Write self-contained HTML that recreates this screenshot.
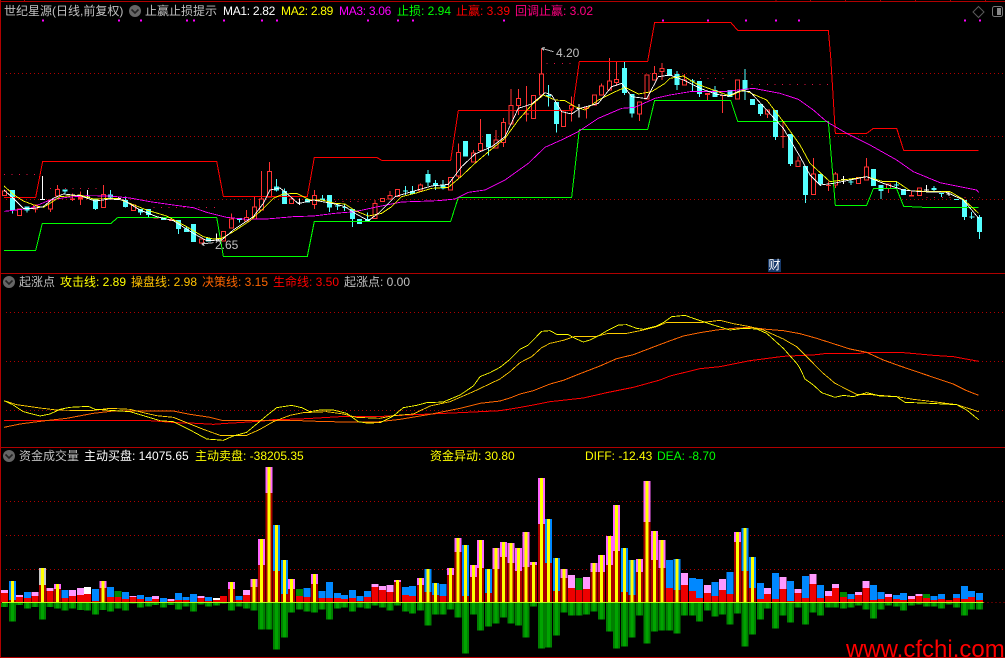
<!DOCTYPE html>
<html><head><meta charset="utf-8"><style>
html,body{margin:0;padding:0;background:#000;width:1005px;height:658px;overflow:hidden}
#w{position:relative;width:1005px;height:658px;background:#000;overflow:hidden}
svg{position:absolute;left:0;top:0}
path,polyline{fill:none}
.t{position:absolute;font:12px/14px "Liberation Sans","WenQuanYi Zen Hei","Noto Sans CJK SC",sans-serif;white-space:pre;color:#c0c0c0}
.m{letter-spacing:-.3px}
</style></head><body><div id="w">
<svg width="1005" height="658" viewBox="0 0 3015 1974" shape-rendering="crispEdges">
<g stroke="#b00000" stroke-width="3" fill="none">
<path d="M0 4.5H3015M1.5 0V1974M0 820.5H3015M0 1342.5H3015M0 1972.5H3015"/>
<path d="M73.5 0V4M2328 0V4M2431 0V4M2536 0V4M2641 0V4M2746 0V4M2851 0V4M2956 0V4"/>
<path stroke-dasharray="3 9" d="M18 220.5H3015M18 409.5H3015M18 598.5H3015M18 937.5H3015M18 1084.5H3015M18 1231.5H3015M18 1504.5H3015M18 1606.5H3015M18 1708.5H3015M2950 1807.5H3015"/>
</g>
<!-- dotted 回调止赢 -->
<g stroke="#e01040" stroke-width="3" stroke-dasharray="3 19.67" fill="none">
<path d="M12 523.5H110M150 565.5H310M460 622.5H650M1640 190.5H1720M2100 235.5H2170M2255 253.5H2490M2780 592.5H2940M1005 604.5H1105"/>
</g>
<!-- magenta top dots -->
<path stroke="#ff00ff" stroke-width="6" d="M126 62h6M354 62h6M420 62h6M558 62h6M579 62h6M669 62h6M783 62h6M828 62h6M1101 62h6M1191 62h6M1236 62h6M1509 62h6M1986 62h6M2121 62h6M2235 62h6M2325 62h6M2394 62h6M2892 62h6M2937 62h6"/>

<!-- candles 1 -->
<g>
<path stroke="#54ffff" stroke-width="15" d="M37 570V632M81 620V632M195 568V574M286 597V627M331 583V592M376 600V621M421 627V638M445 627V645M490 652V660M536 660V687M559 686V696M581 672V726M626 714V724M718 654V660M830 560V572M853 573V612M922 597V608M967 595V602M988 585V623"/>
<path stroke="#54ffff" stroke-width="3" d="M37 570V640M81 620V638M195 568V582M286 597V630M331 570V597M376 590V623M421 627V645M445 627V651M536 660V702M559 680V696M718 654V668M830 537V575M853 566V612M967 585V602M988 585V636"/>
<path stroke="#ff3232" stroke-width="3" d="M106 627V638M151 627V636M172 555V568M310 555V584M695 640V657M739 630V652M763 590V621M785 513V597M808 486V514M874 590V597M943 570V586M943 613V627M217 580V603M241 575V615"/>
<path stroke="#ff3232" stroke-width="15" d="M217 595V600M241 590V599M468 652V656M514 657V663"/>
<path stroke="#ff3232" stroke-width="3" fill="#000" style="fill:#000" d="M8 573h12v14h-12zM52 627h12v20h-12zM100 615h12v12h-12zM145 600h12v27h-12zM166 568h12v20h-12zM304 584h12v39h-12zM394 615h12v17h-12zM598 717h12v12h-12zM664 694h12v29h-12zM689 657h12v27h-12zM733 652h12v11h-12zM757 621h12v36h-12zM779 597h12v33h-12zM802 514h12v77h-12zM868 597h12v13h-12zM937 586h12v27h-12z"/>
<path stroke="#fff" stroke-width="3" d="M127 528V600M120 598.5h15M262 570V597M255 590.5h15M355 590V600M348 595.5h15M649 700V723M642 717.5h15M898 595V615M891 608.5h15"/>
</g>
<!-- candles 2 -->
<g transform="translate(1005 0)">
<path stroke="#54ffff" stroke-width="15" d="M52 627V657M74 657V672M97 657V663M233 573V582M279 522V548M301 549V556M324 555V565M392 423V470M460 402V442M641 285V290M664 306V372M868 204V279M891 282V340"/>
<path stroke="#54ffff" stroke-width="3" d="M7 610V630M0 618.5h15M29 610V633M22 622.5h15M52 627V681M97 638V657M211 558V585M204 573.5h15M233 558V582M279 510V558M301 540V570M324 540V568M460 402V467M641 255V320M664 306V398M868 186V285M891 282V352"/>
<path stroke="#ff3232" stroke-width="3" d="M120 600V610M165 573V586M256 550V555M370 430V537M415 450V459M437 357V430M483 390V420M505 354V441M528 267V317M551 267V345M619 145V222M709 290V365M800 250V258M823 174V243M845 183V258M913 342V363M959 198V220M981 189V240M574 258V365M755 318V355"/>
<path stroke="#ff3232" stroke-width="15" d="M574 340V344M755 323V327"/>
<path stroke="#ff3232" stroke-width="3" style="fill:#000" d="M114 610h12v45h-12zM136 595h12v10h-12zM159 586h12v11h-12zM182 568h12v22h-12zM250 555h12v18h-12zM341 533h12v37h-12zM364 457h12v71h-12zM409 459h12v27h-12zM431 430h12v21h-12zM477 420h12v24h-12zM499 367h12v60h-12zM522 317h12v55h-12zM545 295h12v22h-12zM590 287h12v69h-12zM613 222h12v63h-12zM680 336h12v44h-12zM703 317h12v10h-12zM772 285h12v30h-12zM794 258h12v27h-12zM817 243h12v27h-12zM839 238h12v10h-12zM907 306h12v36h-12zM930 225h12v72h-12zM953 220h12v20h-12zM975 205h12v10h-12z"/>
<path stroke="#fff" stroke-width="3" d="M732 312V352M725 325.5h15"/>
</g>
<!-- candles 3 -->
<g transform="translate(2010 0)">
<path stroke="#54ffff" stroke-width="15" d="M-1 207V228M21 222V255M89 243V282M135 270V291M180 270V291M225 240V270M248 297V315M271 312V342M316 330V411M361 402V492M407 498V585M452 522V552M611 507V558M633 555V573M701 567V585M792 564V570M815 579V582M860 597V600M883 600V651M929 651V696"/>
<path stroke="#54ffff" stroke-width="3" d="M21 213V270M67 237V275M60 243.5h15M89 243V291M135 258V291M225 207V300M271 312V348M316 330V420M361 402V498M407 498V609M452 522V558M543 538V555M536 546.5h15M633 555V597M679 543V565M672 555.5h15M792 558V573M815 579V591M883 600V660M905 636V657M898 651.5h15M929 645V717"/>
<path stroke="#ff3232" stroke-width="3" d="M44 222V240M293 342V354M384 470V483M430 474V522M497 516V564M590 474V501M656 565V579M112 279V300M157 285V339M339 366V444M475 545V573M724 573V590"/>
<path stroke="#ff3232" stroke-width="15" d="M112 279V285M157 285V288M339 408V411M475 555V558M724 585V590"/>
<path stroke="#ff3232" stroke-width="3" style="fill:#000" d="M38 240h12v15h-12zM197 240h12v57h-12zM287 330h12v12h-12zM378 483h12v17h-12zM424 522h12v62h-12zM491 522h12v33h-12zM559 533h12v18h-12zM584 501h12v39h-12zM650 552h12v13h-12zM742 564h12v22h-12z"/>
<path stroke="#fff" stroke-width="3" d="M520 528V552M513 538.5h15M769 555V573M762 570.5h15M837 573V588M830 582.5h15"/>
</g>

<!-- main lines -->
<g stroke-width="3" fill="none">
<polyline stroke="#00ff00" points="12,751 107,751 127,670 333,670 354,652 650,652 670,769 922,769 943,664 1352,664 1375,592 1715,592 1738,388 1943,388 1964,301 2192,301 2213,364 2485,364 2506,616 2600,616 2620,566 2690,566 2711,619 2770,622 2936,622"/>
<polyline stroke="#ff0000" points="12,592 107,592 128,484 650,484 670,589 922,589 943,472 1130,472 1145,481 1352,481 1375,331 1717,331 1738,184 1943,184 1964,67 2192,67 2213,91 2485,91 2492,170 2500,300 2506,400 2600,400 2620,385 2690,385 2711,451 2936,451"/>
<polyline stroke="#ff00ff" stroke-width="2.6" points="12,634 40,631 90,625 150,600 200,592 260,587 330,588 390,594 450,605 520,615 580,623 620,637 680,652 740,658 800,657 880,650 940,648 1005,640 1065,635 1125,622 1205,606 1315,602 1365,597 1405,577 1455,570 1515,540 1585,490 1635,442 1695,415 1735,395 1795,355 1865,325 1905,322 1965,295 2010,285 2070,275 2180,274 2260,265 2340,280 2395,298 2440,330 2480,365 2540,400 2610,435 2690,480 2740,515 2820,548 2930,570 2936,577"/>
<polyline stroke="#ffff00" stroke-width="2.6" points="12,558 40,583 70,603 110,618 130,622 150,610 180,590 240,585 280,597 350,595 390,610 440,630 500,648 560,680 610,710 640,717 665,715 700,695 750,662 785,630 820,595 850,582 890,580 930,600 965,600 1005,610 1035,612 1065,632 1105,648 1145,640 1175,620 1205,590 1245,580 1295,565 1345,562 1385,528 1425,490 1475,447 1515,415 1555,360 1595,315 1630,285 1665,300 1695,302 1725,320 1755,330 1795,300 1835,280 1875,262 1915,282 1955,275 1995,250 2010,235 2050,228 2090,252 2140,270 2190,288 2230,270 2300,300 2350,365 2400,435 2430,490 2490,545 2550,537 2600,530 2650,545 2690,545 2730,572 2800,575 2850,575 2890,598 2936,640"/>
<polyline stroke="#ffffff" stroke-width="2.6" points="12,570 40,595 70,625 100,625 130,620 160,595 190,582 240,587 285,603 330,597 370,600 420,630 470,650 520,662 580,700 620,722 665,720 700,690 760,650 790,610 810,570 840,564 860,580 895,611 940,600 1005,612 1035,620 1065,640 1105,662 1135,640 1185,590 1225,578 1295,558 1345,553 1385,500 1425,462 1475,440 1515,410 1555,325 1595,312 1635,278 1655,285 1685,335 1715,342 1740,325 1795,310 1835,260 1865,250 1895,290 1940,296 1975,230 2010,225 2050,240 2100,265 2150,283 2185,288 2220,272 2250,275 2300,330 2350,385 2400,470 2430,525 2460,555 2500,550 2550,540 2600,530 2650,550 2710,570 2760,575 2840,577 2890,600 2936,655"/>
</g>
<!-- arrows -->
<g stroke="#c0c0c0" stroke-width="3" fill="none">
<path d="M1625 145L1660 155M1625 145l9-3M1625 145l7 6"/>
<path d="M605 732L640 728M605 732l9-5M605 732l8 5"/>
</g>

<!-- panel 2 -->
<g stroke-width="3" fill="none">
<polyline stroke="#ff0000" points="12,1262 450,1262 530,1268 590,1270 640,1273 680,1270 730,1267 790,1263 820,1259 900,1257 1020,1250 1130,1250 1200,1246 1290,1242 1400,1237 1500,1232 1550,1224 1600,1215 1650,1205 1750,1194 1820,1178 1900,1162 1980,1140 2010,1128 2100,1106 2160,1100 2250,1082 2350,1069 2450,1064 2480,1060 2580,1060 2600,1057 2700,1057 2800,1066 2860,1070 2936,1084"/>
<polyline stroke="#ff6600" points="12,1282 60,1272 120,1264 200,1255 280,1240 340,1233 520,1233 570,1243 630,1252 670,1262 730,1262 790,1262 900,1262 980,1265 1070,1266 1130,1266 1200,1258 1290,1243 1380,1225 1440,1210 1500,1203 1530,1194 1560,1182 1600,1172 1650,1152 1690,1141 1740,1121 1800,1098 1850,1076 1900,1064 1950,1045 2000,1026 2050,1008 2100,998 2150,990 2200,985 2250,982 2300,988 2350,992 2400,1001 2450,1015 2500,1031 2550,1047 2600,1057 2650,1080 2700,1098 2750,1115 2800,1132 2860,1152 2900,1172 2936,1186"/>
<polyline stroke="#ffcc00" stroke-width="2.6" points="12,1202 50,1214 120,1224 170,1230 210,1231 280,1231 330,1225 390,1228 430,1238 470,1247 520,1252 570,1272 610,1288 660,1306 740,1306 780,1288 820,1265 870,1246 910,1238 980,1235 1030,1242 1070,1252 1140,1255 1180,1247 1240,1242 1290,1218 1350,1205 1420,1175 1500,1137 1530,1115 1560,1088 1595,1070 1625,1043 1650,1030 1690,1021 1725,1009 1790,1009 1825,1000 1880,1000 1930,990 1970,980 2000,967 2110,967 2160,961 2200,971 2245,979 2290,990 2350,1017 2390,1040 2430,1080 2465,1116 2505,1150 2570,1183 2600,1183 2690,1190 2740,1198 2800,1205 2870,1214 2936,1235"/>
<polyline stroke="#ffff00" stroke-width="2.6" points="12,1202 40,1215 70,1235 120,1248 150,1242 180,1228 210,1222 265,1219 285,1228 330,1231 390,1235 440,1250 480,1262 520,1265 570,1290 620,1317 670,1321 700,1308 740,1297 770,1272 800,1247 830,1223 875,1216 905,1223 930,1235 960,1230 1000,1230 1040,1240 1075,1265 1100,1269 1140,1268 1180,1248 1210,1223 1250,1216 1280,1208 1330,1206 1380,1185 1420,1158 1440,1130 1470,1118 1500,1102 1530,1078 1560,1048 1585,1035 1625,994 1650,992 1670,1003 1705,1004 1725,1015 1750,1026 1770,1020 1800,1005 1825,990 1855,975 1880,974 1910,985 1930,988 1970,978 1990,968 2015,950 2055,946 2080,955 2110,965 2140,975 2190,990 2230,985 2270,987 2300,1000 2350,1045 2390,1090 2400,1105 2415,1137 2440,1155 2465,1178 2505,1192 2530,1186 2560,1190 2600,1178 2640,1188 2690,1190 2715,1207 2790,1210 2870,1214 2900,1230 2936,1259"/>
</g>

<!-- panel 3 bars -->
<g transform="translate(0 1335)" fill="none">
<path stroke="#ff99ff" stroke-width="21" d="M14 435V444M59 450V456M105 441V453M150 429V438M218 435V453M241 429V450M399 453V456M467 453V462M513 462V468M603 453V459M739 435V450"/>
<path stroke="#0088ff" stroke-width="21" d="M82 441V459M195 435V459M286 432V468M331 426V456M377 441V462M422 450V462M445 456V468M490 459V471M535 444V465M558 456V465M581 447V471M626 456V468M717 453V465M921 429V456M966 438V459M989 411V459M37 408V465M830 240V378M853 345V447"/>
<path stroke="#008800" stroke-width="21" d="M354 438V456M898 432V453"/>
<path stroke="#ffffff" stroke-width="21" d="M263 426V447M649 459V465"/>
<path stroke="#c8c8c8" stroke-width="21" d="M127 369V420"/>
<path stroke="#ff66ff" stroke-width="21" d="M173 417V432M309 408V429M694 411V432M762 402V426M785 282V360M807 66V144M875 402V432M943 387V417"/>
<path stroke="#ee0000" stroke-width="21" d="M14 444V472M59 456V472M82 459V472M105 453V472M150 438V472M195 459V472M218 453V472M241 450V472M263 447V472M286 468V472M331 456V472M354 456V472M377 462V472M399 456V472M422 462V472M445 468V472M467 462V472M513 468V472M535 465V472M558 465V472M603 459V472M626 468V472M649 465V472M671 453V472M717 465V472M739 450V472M898 453V472M921 456V472M966 459V472M989 459V472"/>
<path stroke="#aa0000" stroke-width="21" d="M37 465V472M127 420V472M173 432V472M309 429V472M694 432V472M762 426V472M785 360V472M807 144V472M830 378V472M853 447V472M875 432V472M943 417V472"/>
<path stroke="#ffff00" stroke-width="9" d="M37 408V472M127 369V472M173 417V472M309 408V472M694 411V472M762 402V472M785 282V472M807 66V472M830 240V472M853 345V472M875 402V472M943 387V472"/>
<path stroke="#008000" stroke-width="21" d="M14 474V486M37 474V530M59 474V480M82 474V491M105 474V486M127 474V524M150 474V486M173 474V491M195 474V497M218 474V491M241 474V495M263 474V497M286 474V509M309 474V495M331 474V500M354 474V491M377 474V497M399 474V476M422 474V488M445 474V485M467 474V480M490 474V488M513 474V480M535 474V494M558 474V485M581 474V500M603 474V479M626 474V485M649 474V482M671 474V476M694 474V497M717 474V485M739 474V491M762 474V497M785 474V554M807 474V554M830 474V614M853 474V578M875 474V503M898 474V494M921 474V500M943 474V503M966 474V494M989 474V524"/>
<path stroke="#00a400" stroke-width="9" d="M14 474V486M37 474V530M59 474V480M82 474V491M105 474V486M127 474V524M150 474V486M173 474V491M195 474V497M218 474V491M241 474V495M263 474V497M286 474V509M309 474V495M331 474V500M354 474V491M377 474V497M399 474V476M422 474V488M445 474V485M467 474V480M490 474V488M513 474V480M535 474V494M558 474V485M581 474V500M603 474V479M626 474V485M649 474V482M671 474V476M694 474V497M717 474V485M739 474V491M762 474V497M785 474V554M807 474V554M830 474V614M853 474V578M875 474V503M898 474V494M921 474V500M943 474V503M966 474V494M989 474V524"/>
</g>
<g transform="translate(1005 1335)" fill="none">
<path stroke="#ff99ff" stroke-width="21" d="M120 417V426M143 423V435M165 420V441M709 390V429M755 396V432"/>
<path stroke="#0088ff" stroke-width="21" d="M7 444V459M29 450V462M52 435V459M75 453V468M97 438V456M211 426V450M233 423V453M324 417V453M279 372V441M301 414V450M392 300V453M460 372V444M641 222V354M664 339V438M868 309V441M891 345V450"/>
<path stroke="#008800" stroke-width="21" d="M732 399V435"/>
<path stroke="#ff66ff" stroke-width="21" d="M188 405V411M256 399V420M347 369V390M369 279V321M415 360V396M437 285V369M483 309V372M505 291V336M528 294V354M551 309V378M573 261V366M596 351V360M619 99V237M687 372V399M777 354V381M800 330V381M823 273V360M845 180V318M913 342V381M936 108V231M959 258V345M981 285V369"/>
<path stroke="#ee0000" stroke-width="21" d="M7 459V472M29 462V472M52 459V472M75 468V472M97 456V472M120 426V472M143 435V472M165 441V472M211 450V472M233 453V472M324 453V472M709 429V472M732 435V472M755 432V472"/>
<path stroke="#aa0000" stroke-width="21" d="M188 411V472M256 420V472M279 441V472M301 450V472M347 390V472M369 321V472M392 453V472M415 396V472M437 369V472M460 444V472M483 372V472M505 336V472M528 354V472M551 378V472M573 366V472M596 360V472M619 237V472M641 354V472M664 438V472M687 399V472M777 381V472M800 381V472M823 360V472M845 318V472M868 441V472M891 450V472M913 381V472M936 231V472M959 345V472M981 369V472"/>
<path stroke="#ffff00" stroke-width="9" d="M188 405V472M256 399V472M279 372V472M301 414V472M347 369V472M369 279V472M392 300V472M415 360V472M437 285V472M460 372V472M483 309V472M505 291V472M528 294V472M551 309V472M573 261V472M596 351V472M619 99V472M641 222V472M664 339V472M687 372V472M777 354V472M800 330V472M823 273V472M845 180V472M868 309V472M891 345V472M913 342V472M936 108V472M959 258V472M981 285V472"/>
<path stroke="#008000" stroke-width="21" d="M7 474V491M29 474V488M52 474V500M75 474V488M97 474V491M120 474V482M143 474V488M165 474V497M188 474V482M211 474V500M233 474V506M256 474V497M279 474V542M301 474V509M324 474V509M347 474V494M369 474V518M392 474V626M415 474V509M437 474V557M460 474V545M483 474V536M505 474V518M528 474V536M551 474V542M573 474V578M596 474V485M619 474V611M641 474V608M664 474V572M687 474V503M709 474V512M732 474V512M755 474V509M777 474V500M800 474V524M823 474V560M845 474V611M868 474V605M891 474V578M913 474V512M936 474V596M959 474V560M981 474V557"/>
<path stroke="#00a400" stroke-width="9" d="M7 474V491M29 474V488M52 474V500M75 474V488M97 474V491M120 474V482M143 474V488M165 474V497M188 474V482M211 474V500M233 474V506M256 474V497M279 474V542M301 474V509M324 474V509M347 474V494M369 474V518M392 474V626M415 474V509M437 474V557M460 474V545M483 474V536M505 474V518M528 474V536M551 474V542M573 474V578M596 474V485M619 474V611M641 474V608M664 474V572M687 474V503M709 474V512M732 474V512M755 474V509M777 474V500M800 474V524M823 474V560M845 474V611M868 474V605M891 474V578M913 474V512M936 474V596M959 474V560M981 474V557"/>
</g>
<g transform="translate(2010 1335)" fill="none">
<path stroke="#ff99ff" stroke-width="21" d="M44 384V420M112 420V444M157 402V435M293 429V447M339 396V432M384 432V444M429 387V417M475 438V453M497 417V429M565 441V450M588 408V429M656 447V456M724 453V462M747 447V453"/>
<path stroke="#0088ff" stroke-width="21" d="M-1 345V429M21 342V435M67 399V438M89 402V459M135 411V453M180 381V447M225 249V378M248 336V429M271 414V462M316 384V462M361 408V468M407 393V459M452 420V459M543 447V462M611 420V465M633 441V462M679 450V462M701 444V465M792 453V465M815 447V462M860 447V459M883 423V462M905 438V456M928 444V465"/>
<path stroke="#008800" stroke-width="21" d="M520 441V456M769 447V459"/>
<path stroke="#ff66ff" stroke-width="21" d="M203 261V291"/>
<path stroke="#ee0000" stroke-width="21" d="M-1 429V472M44 420V472M67 438V472M89 459V472M112 444V472M135 453V472M157 435V472M180 447V472M271 462V472M293 447V472M316 462V472M339 432V472M361 468V472M384 444V472M407 459V472M429 417V472M452 459V472M475 453V472M497 429V472M520 456V472M543 462V472M565 450V472M588 429V472M611 465V472M633 462V472M656 456V472M679 462V472M701 465V472M724 462V472M747 453V472M769 459V472M792 465V472M815 462V472M837 465V472M860 459V472M883 462V472M905 456V472M928 465V472"/>
<path stroke="#aa0000" stroke-width="21" d="M21 435V472M203 291V472M225 378V472M248 429V472"/>
<path stroke="#ffff00" stroke-width="9" d="M21 342V472M203 261V472M225 249V472M248 336V472"/>
<path stroke="#008000" stroke-width="21" d="M-1 474V557M21 474V566M44 474V512M67 474V512M89 474V530M112 474V497M135 474V515M157 474V509M180 474V539M203 474V506M225 474V605M248 474V569M271 474V524M293 474V491M316 474V551M339 474V512M361 474V533M384 474V488M407 474V539M429 474V503M452 474V512M475 474V488M497 474V488M520 474V491M543 474V488M565 474V482M588 474V494M611 474V521M633 474V494M656 474V482M679 474V485M701 474V497M724 474V482M747 474V479M769 474V485M792 474V485M815 474V491M837 474V479M860 474V488M883 474V512M905 474V494M928 474V494"/>
<path stroke="#00a400" stroke-width="9" d="M-1 474V557M21 474V566M44 474V512M67 474V512M89 474V530M112 474V497M135 474V515M157 474V509M180 474V539M203 474V506M225 474V605M248 474V569M271 474V524M293 474V491M316 474V551M339 474V512M361 474V533M384 474V488M407 474V539M429 474V503M452 474V512M475 474V488M497 474V488M520 474V491M543 474V488M565 474V482M588 474V494M611 474V521M633 474V494M656 474V482M679 474V485M701 474V497M724 474V482M747 474V479M769 474V485M792 474V485M815 474V491M837 474V479M860 474V488M883 474V512M905 474V494M928 474V494"/>
</g>
<path stroke="#aaff22" stroke-width="3" d="M6 1807.5H2950"/>
</svg>

<!-- icons -->
<svg width="1005" height="658" viewBox="0 0 1005 658">
<circle cx="135" cy="11" r="6" fill="#666"/><path d="M131.5 9.5l3.5 3.5 3.5-3.5" stroke="#222" stroke-width="1.6" fill="none"/>
<circle cx="9" cy="282" r="6" fill="#666"/><path d="M5.5 280.5l3.5 3.5 3.5-3.5" stroke="#222" stroke-width="1.6" fill="none"/>
<circle cx="9" cy="456" r="6" fill="#666"/><path d="M5.5 454.5l3.5 3.5 3.5-3.5" stroke="#222" stroke-width="1.6" fill="none"/>
<path d="M978.5 6.5l5.5 5.5-5.5 5.5-5.5-5.5z" stroke="#5a5a5a" fill="none"/>
<rect x="992.5" y="6.5" width="10" height="10" rx="2" stroke="#777" fill="none"/><rect x="997" y="8" width="4" height="7" fill="#888"/>
</svg>

<span class="t" style="left:4px;top:4px">世纪星源(日线,前复权)</span>
<span class="t" style="left:145px;top:4px">止赢止损提示</span>
<span class="t m" style="left:223px;top:4px;color:#fff">MA1: 2.82</span>
<span class="t m" style="left:281px;top:4px;color:#ff0">MA2: 2.89</span>
<span class="t m" style="left:339px;top:4px;color:#f0f">MA3: 3.06</span>
<span class="t" style="left:397px;top:4px;color:#0f0">止损: 2.94</span>
<span class="t" style="left:456px;top:4px;color:#f00">止赢: 3.39</span>
<span class="t" style="left:515px;top:4px;color:#ff0080">回调止赢: 3.02</span>

<span class="t" style="left:556px;top:46px">4.20</span>
<span class="t" style="left:215px;top:238px">2.65</span>
<span class="t" style="left:768px;top:259px;width:13px;height:13px;background:#17396a;color:#fff;text-align:center;line-height:13px">财</span>

<span class="t" style="left:19px;top:275px">起涨点</span>
<span class="t" style="left:60px;top:275px;color:#ff0">攻击线: 2.89</span>
<span class="t" style="left:131px;top:275px;color:#ffc000">操盘线: 2.98</span>
<span class="t" style="left:202px;top:275px;color:#ff6600">决策线: 3.15</span>
<span class="t" style="left:273px;top:275px;color:#f00">生命线: 3.50</span>
<span class="t" style="left:344px;top:275px">起涨点: 0.00</span>

<span class="t" style="left:19px;top:449px">资金成交量</span>
<span class="t" style="left:84px;top:449px;color:#fff">主动买盘: 14075.65</span>
<span class="t" style="left:195px;top:449px;color:#ff0">主动卖盘: -38205.35</span>
<span class="t" style="left:430px;top:449px;color:#ff0">资金异动: 30.80</span>
<span class="t" style="left:585px;top:449px;color:#ff0">DIFF: -12.43</span>
<span class="t" style="left:657px;top:449px;color:#0f0">DEA: -8.70</span>

<span class="t" style="left:846px;top:636px;font-size:24px;line-height:28px;color:#f00;font-family:'Liberation Sans',sans-serif">www.cfchi.com</span>
</div></body></html>
